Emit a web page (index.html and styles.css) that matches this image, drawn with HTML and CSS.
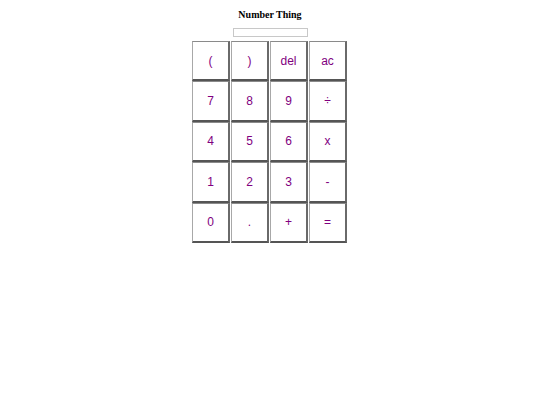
FILE: index.html
```html
<!DOCTYPE html>
<html>
<head>
<meta charset="utf-8">
<link rel="stylesheet" href="styles.css">
</head>
<body>
<div class="app">
  <h1 class="title">Number Thing</h1>
  <input class="display" type="text">
  <div class="keys">
    <button class="key">(</button>
    <button class="key">)</button>
    <button class="key">del</button>
    <button class="key">ac</button>
    <button class="key">7</button>
    <button class="key">8</button>
    <button class="key">9</button>
    <button class="key">÷</button>
    <button class="key">4</button>
    <button class="key">5</button>
    <button class="key">6</button>
    <button class="key">x</button>
    <button class="key">1</button>
    <button class="key">2</button>
    <button class="key">3</button>
    <button class="key">-</button>
    <button class="key">0</button>
    <button class="key">.</button>
    <button class="key">+</button>
    <button class="key">=</button>
  </div>
</div>
</body>
</html>
```
FILE: styles.css
```css
html, body { margin: 0; padding: 0; background: #fff; }
body { padding: 8px; }
.app {
  display: flex;
  flex-direction: column;
  align-items: center;
}
.title {
  font-family: "Liberation Serif", serif;
  font-size: 10px;
  font-weight: bold;
  margin: 0;
  line-height: 13px;
  color: #000;
}
.display {
  margin-top: 7px;
  width: 75px;
  height: 9px;
  box-sizing: border-box;
  border: 1px solid #c8c8c8;
  padding: 0;
  background: #fff;
}
.keys {
  margin-top: 4px;
  margin-right: 1px;
  display: grid;
  grid-template-columns: repeat(4, 38px);
  grid-auto-rows: 40.4px;
  column-gap: 1px;
  row-gap: 0;
}
.key {
  box-sizing: border-box;
  background: #fff;
  border-style: solid;
  border-width: 1px 2px 2px 1px;
  border-top-color: #8a8a8a;
  border-left-color: #a8a8a8;
  border-right-color: #6a6a6a;
  border-bottom-color: #555;
  color: #800080;
  font-family: "Liberation Sans", Arial, sans-serif;
  font-size: 12px;
  padding: 0;
  margin: 0;
}
```
